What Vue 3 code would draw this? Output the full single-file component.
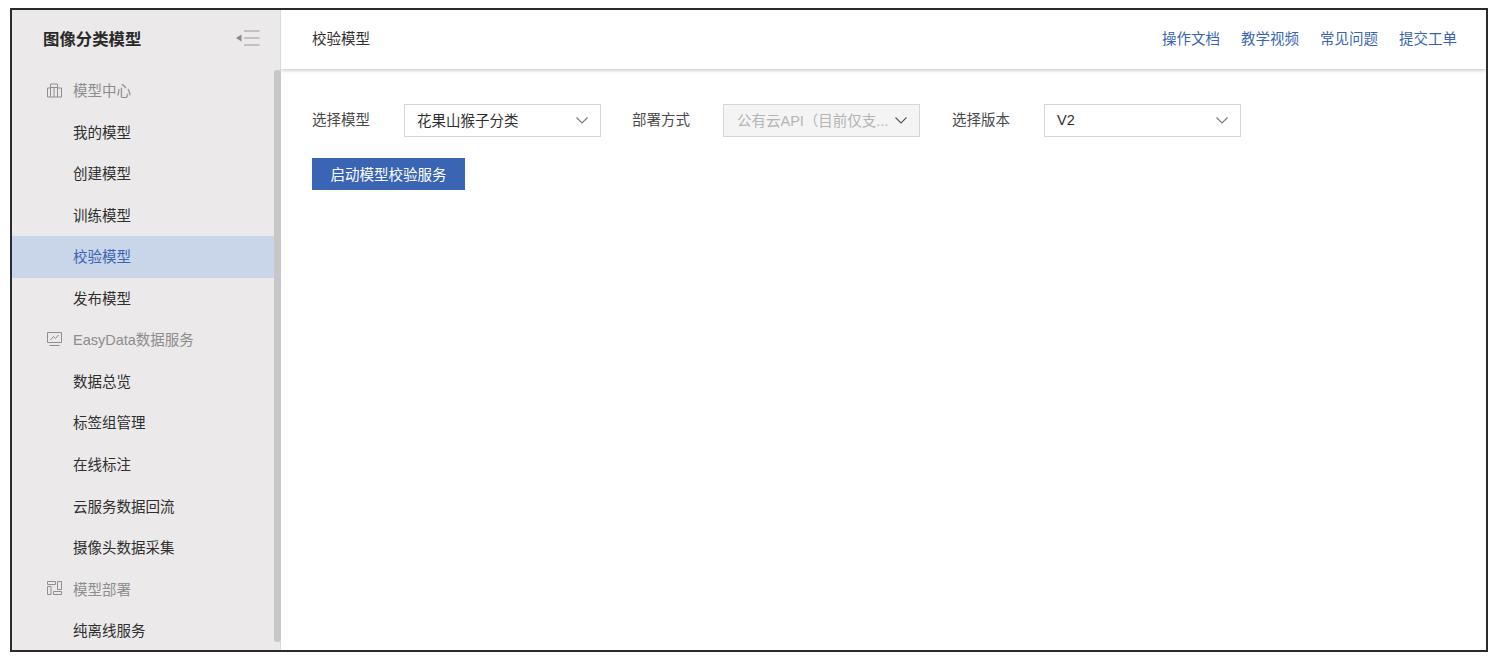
<script setup>
const groups = [
  { name: '模型中心', icon: 'building', items: ['我的模型', '创建模型', '训练模型', '校验模型', '发布模型'] },
  { name: 'EasyData数据服务', icon: 'chart', items: ['数据总览', '标签组管理', '在线标注', '云服务数据回流', '摄像头数据采集'] },
  { name: '模型部署', icon: 'deploy', items: ['纯离线服务'] },
]
const links = ['操作文档', '教学视频', '常见问题', '提交工单']
const fields = [
  { label: '选择模型', value: '花果山猴子分类' },
  { label: '部署方式', value: '公有云API（目前仅支...', disabled: true },
  { label: '选择版本', value: 'V2' },
]
</script>

<template>
  <div class="page">
    <div class="frame">
      <aside class="sidebar">
        <div class="brand">
          <span class="brand-name">图像分类模型</span>
          <svg class="collapse" width="24" height="16" viewBox="0 0 24 16" fill="none">
            <path d="M0 8 L5.5 4.5 V11.5 Z" fill="#8a8a8a" />
            <path d="M8 1H23.5M8 8H23.5M8 15H23.5" stroke="#9a9a9a" stroke-width="1" />
          </svg>
        </div>
        <nav class="nav">
          <template v-for="g in groups" :key="g.name">
            <div class="row group">
              <svg class="gicon" width="16" height="16" viewBox="0 0 16 16" fill="none" stroke="#8f8f8f" stroke-width="1">
                <template v-if="g.icon === 'building'">
                  <path d="M0.5 6H3.5V15H0.5ZM3.5 2H10.5V15H3.5ZM10.5 6H14.5V15H10.5ZM3.5 5.5H10.5M7 5.5V15" />
                </template>
                <template v-else-if="g.icon === 'chart'">
                  <path d="M0.5 1.5H14.5V11.5H0.5ZM2.5 14.5H12.5" />
                  <path d="M3.5 9L6.5 5.5L8.5 7.5L11.5 4" />
                </template>
                <template v-else>
                  <path d="M0.5 1.5H8.5V4.5H0.5ZM10.5 1.5H14.5V9.5H10.5ZM6.5 11.5H14.5V14.5H6.5ZM0.5 6.5H4V14.5H0.5Z" />
                </template>
              </svg>
              <span>{{ g.name }}</span>
            </div>
            <div
              v-for="item in g.items"
              :key="item"
              class="row item"
              :class="{ active: item === '校验模型' }"
            >{{ item }}</div>
          </template>
        </nav>
        <div class="scrollbar"></div>
      </aside>
      <main class="main">
        <header class="topbar">
          <span class="crumb">校验模型</span>
          <div class="links">
            <a v-for="l in links" :key="l" class="link">{{ l }}</a>
          </div>
        </header>
        <section class="content">
          <div class="form">
            <template v-for="f in fields" :key="f.label">
              <label class="label">{{ f.label }}</label>
              <div class="select" :class="{ disabled: f.disabled }">
                <span class="value">{{ f.value }}</span>
                <svg class="chevron" width="12" height="7" viewBox="0 0 12 7" fill="none">
                  <path d="M0.5 0.5L6 6L11.5 0.5" :stroke="f.disabled ? '#555' : '#777'" stroke-width="1.1" />
                </svg>
              </div>
            </template>
          </div>
          <button class="primary">启动模型校验服务</button>
        </section>
      </main>
    </div>
  </div>
</template>

<style>
html, body { margin: 0; background: #fff; }
</style>

<style scoped>
.page {
  padding: 8px 9px 0 10px;
  font-family: "Liberation Sans", "Noto Sans CJK SC", sans-serif;
  font-size: 14.5px;
}
.frame {
  box-sizing: border-box;
  height: 644px;
  border: 2px solid #2b2b2b;
  display: flex;
  overflow: hidden;
  background: #fff;
}
.sidebar {
  position: relative;
  width: 269px;
  flex: none;
  background: #ebe9ea;
  box-shadow: inset -1px 0 0 #d9d9d9;
  overflow: hidden;
}
.brand {
  height: 60px;
  box-sizing: border-box;
  padding: 0 21px 5px 31px;
  display: flex;
  align-items: center;
  justify-content: space-between;
}
.brand-name {
  font-size: 16.4px;
  font-weight: 700;
  color: #2a2a2a;
}
.row {
  box-sizing: border-box;
  height: 41.55px;
  display: flex;
  align-items: center;
  padding-left: 61px;
  padding-bottom: 2.4px;
  color: #2f2f2f;
}
.group {
  color: #8d8d8d;
  padding-left: 35px;
  gap: 10px;
}
.gicon { flex: none; }
.active {
  background: #c9d5e8;
  color: #3a65b5;
  margin-right: 7px;
}
.scrollbar {
  position: absolute;
  top: 60px;
  right: 0;
  width: 7px;
  height: 572px;
  border-radius: 3px;
  background: #c8c6c7;
}
.main {
  flex: 1;
  min-width: 0;
  display: flex;
  flex-direction: column;
}
.topbar {
  height: 59px;
  flex: none;
  box-sizing: border-box;
  padding: 0 29px 4px 31px;
  display: flex;
  align-items: center;
  justify-content: space-between;
  box-shadow: 0 1px 4px rgba(0, 0, 0, 0.25);
  color: #2f2f2f;
}
.links { display: flex; gap: 21px; }
.link { color: #3a65b5; }
.content { padding: 35px 31px 0; }
.form {
  display: flex;
  align-items: center;
}
.label {
  width: 92px;
  flex: none;
  color: #4a4a4a;
  margin-top: -5px;
}
.select {
  box-sizing: border-box;
  width: 197px;
  height: 33px;
  flex: none;
  margin-right: 31px;
  padding: 0 12px;
  border: 1px solid #d6d6d6;
  display: flex;
  align-items: center;
  justify-content: space-between;
  gap: 6px;
  color: #2f2f2f;
}
.select.disabled {
  background: #f4f4f4;
  color: #b4b4b4;
  margin-left: -1px;
  margin-right: 32px;
  padding-left: 13px;
}
.value {
  flex: 1;
  min-width: 0;
  white-space: nowrap;
  padding-bottom: 2px;
}
.chevron { flex: none; }
.primary {
  display: block;
  margin-top: 21px;
  width: 153px;
  height: 32px;
  border: 0;
  padding: 0 0 2px;
  background: #3a65b5;
  color: #fff;
  font: inherit;
}
</style>
